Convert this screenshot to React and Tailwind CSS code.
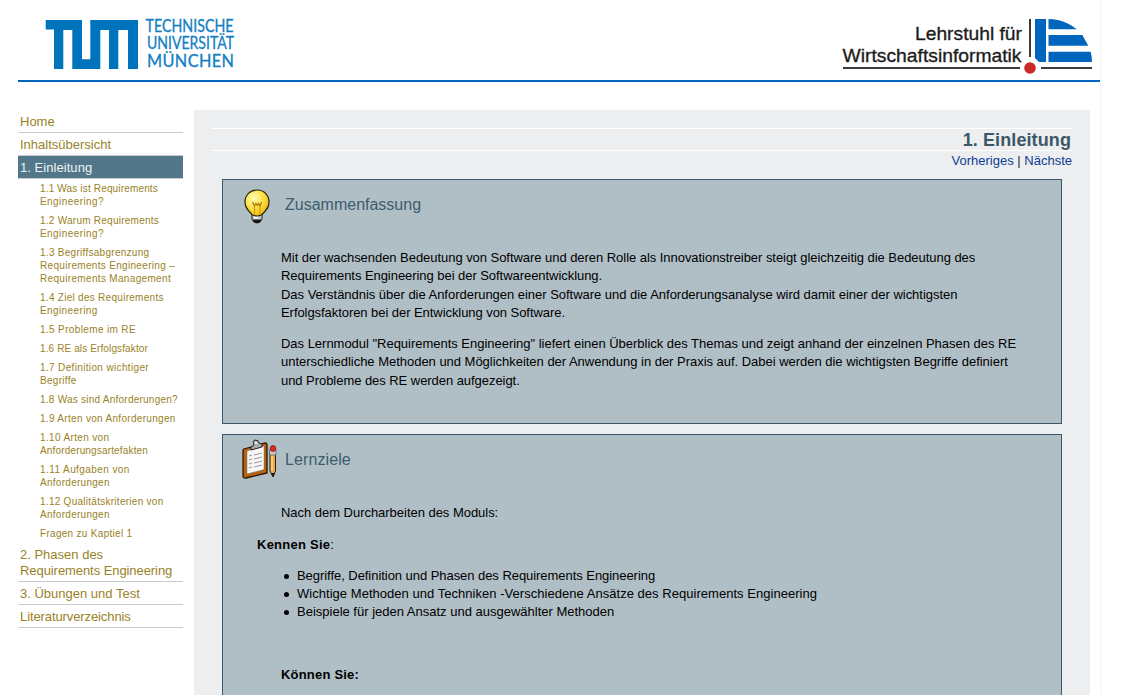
import React from "react";

const chapters = [
  [["1.1 Was ist Requirements", "tracking-[0.16px]"], ["Engineering?", "tracking-[0.42px]"]],
  [["1.2 Warum Requirements", "tracking-[0.25px]"], ["Engineering?", "tracking-[0.42px]"]],
  [["1.3 Begriffsabgrenzung", "tracking-[0.28px]"], ["Requirements Engineering –", "tracking-[0.32px]"], ["Requirements Management", "tracking-[0.33px]"]],
  [["1.4 Ziel des Requirements", "tracking-[0.28px]"], ["Engineering", "tracking-[0.4px]"]],
  [["1.5 Probleme im RE", "tracking-[0.36px]"]],
  [["1.6 RE als Erfolgsfaktor", "tracking-[0.12px]"]],
  [["1.7 Definition wichtiger", "tracking-[0.35px]"], ["Begriffe", "tracking-[0.3px]"]],
  [["1.8 Was sind Anforderungen?", "tracking-[0.24px]"]],
  [["1.9 Arten von Anforderungen", "tracking-[0.31px]"]],
  [["1.10 Arten von", "tracking-[0.35px]"], ["Anforderungsartefakten", "tracking-[0.16px]"]],
  [["1.11 Aufgaben von", "tracking-[0.42px]"], ["Anforderungen", "tracking-[0.28px]"]],
  [["1.12 Qualitätskriterien von", "tracking-[0.27px]"], ["Anforderungen", "tracking-[0.28px]"]],
  [["Fragen zu Kaptiel 1", "tracking-[0.3px]"]],
];

const goals = [
  ["Begriffe, Definition und Phasen des Requirements Engineering", "tracking-[-0.05px]"],
  ["Wichtige Methoden und Techniken -Verschiedene Ansätze des Requirements Engineering", "tracking-[0.035px]"],
  ["Beispiele für jeden Ansatz und ausgewählter Methoden", "tracking-[0px]"],
];

function Line({ t, c = "" }) {
  return <span className={"block whitespace-nowrap " + c}>{t}</span>;
}

function NavItem({ children, active }) {
  return (
    <a className={"block border-b border-[#c9c9c9] pb-[2px] pl-[2px] pt-1 text-[13px] leading-4 " + (active ? "bg-[#52778a] text-[#eef2f4]" : "text-[#998226]")}>
      {children}
    </a>
  );
}

function TumLogo() {
  return (
    <svg width="192" height="56" viewBox="0 0 192 56" className="block">
      <path fill="#0073bd" d="M0.700 4H37V43.300H45.300V4H93V53H83V14H73.300V53H64V14H55.300V53H27.300V14H18.300V53H9V13.500H0.700Z" />
      <g fill="#1380c3" stroke="#1380c3" strokeWidth="0.300" fontFamily="Lato, sans-serif" fontSize="16.300">
        <text x="100.500" y="16" textLength="88" lengthAdjust="spacingAndGlyphs">TECHNISCHE</text>
        <text x="102" y="33.300" textLength="87" lengthAdjust="spacingAndGlyphs">UNIVERSITÄT</text>
        <text x="102" y="50.600" textLength="87" lengthAdjust="spacing">MÜNCHEN</text>
      </g>
    </svg>
  );
}

function ChairLogo() {
  return (
    <svg width="252" height="58" viewBox="0 0 252 58" className="block">
      <g fill="#1c1c1c" stroke="#1c1c1c" strokeWidth="0.350" fontFamily="'Liberation Sans', Arial, sans-serif" fontSize="19">
        <text x="75" y="22" textLength="107" lengthAdjust="spacingAndGlyphs">Lehrstuhl für</text>
        <text x="2.500" y="43.500" textLength="179" lengthAdjust="spacingAndGlyphs">Wirtschaftsinformatik</text>
      </g>
      <path fill="#3c3a3b" d="M189 1H191V39H189ZM3 49H180V51H3ZM201 49H252V51H201Z" />
      <path fill="#0065bd" d="M195 1H206V44H199L195 40ZM208.500 1C219 1 229 5 236.700 11.300H208.500ZM208.500 17H242.300L248.300 27.700H208.500ZM208.500 33.700H250.700Q252 39 252 44H208.500Z" />
      <circle cx="190" cy="50" r="5.800" fill="#cb2a26" />
    </svg>
  );
}

function Bulb() {
  return (
    <svg width="27" height="36" viewBox="0 0 27 36" className="block">
      <defs>
        <radialGradient id="glow" cx="0.36" cy="0.3" r="0.7">
          <stop offset="0" stopColor="#fffbb5" />
          <stop offset="0.5" stopColor="#fbe650" />
          <stop offset="1" stopColor="#f3c010" />
        </radialGradient>
      </defs>
      <path d="M8 24H18V30Q17 34 13 34Q9 34 8 30Z" fill="#c8c8c8" stroke="#222" />
      <path d="M8.500 30.500H17.500L15 34H11Z" fill="#151515" />
      <path d="M10 28.500H14" stroke="#fff" strokeWidth="2" />
      <path d="M13 1C5.500 1 1 6.500 1 13C1 19 4.500 22 8 25.500Q13 28.500 18 25.500C21.500 22 25 19 25 13C25 6.500 20.500 1 13 1Z" fill="url(#glow)" stroke="#2c2508" strokeWidth="1.200" />
      <path d="M10.500 25.500V17.500M16 25.500V17.500" fill="none" stroke="#d49a18" strokeWidth="1.200" />
      <path d="M8.500 13L10.500 17L12 14.500L13.200 16.500L14.500 14.500L16 17L17.500 13" fill="none" stroke="#b37a10" strokeWidth="1.300" />
    </svg>
  );
}

function Clipboard() {
  return (
    <svg width="36" height="42" viewBox="0 0 36 42" className="block">
      <path d="M2 10L23 4Q25 4 25 6V34L4 39Q1 39.500 1 37V12Q1 10 2 10Z" fill="#b8610f" stroke="#2b1604" strokeWidth="1.300" />
      <path d="M5 12L22 7V30.500L5 35Z" fill="#f8f8f8" stroke="#777" strokeWidth="0.500" />
      <path d="M7 17L10 16M7 21L10 20M7 25L10 24M7 29L10 28M12 16L20 14M12 20L20 18M12 24L20 22M12 28L20 26" stroke="#9c9c9c" strokeWidth="1.100" />
      <path d="M9 11V8L12 6Q10 2 13 1Q17 1 17 4L20 5V8Z" fill="#a9a9a9" stroke="#252525" />
      <circle cx="14" cy="4" r="1.300" fill="#eee" />
      <path d="M28 13H33.500V32L31 38L28 32Z" fill="#e9a94a" stroke="#332108" />
      <path d="M30 14V32" stroke="#ffdf91" strokeWidth="1.300" />
      <path d="M29 34H33L31 38Z" fill="#151515" />
      <path d="M27.500 11H34V16H27.500Z" fill="#c6c6cb" stroke="#555" strokeWidth="0.700" />
      <circle cx="31" cy="9.500" r="2.900" fill="#d92b20" stroke="#7b1714" strokeWidth="0.700" />
    </svg>
  );
}

export default function App() {
  return (
    <div className="h-[695px] w-[1134px] overflow-hidden bg-white font-['Liberation_Sans',Arial,sans-serif]">
      <div className="h-full w-[1101px] border-r border-[#f3f4f5]">
        <header className="ml-[18px] flex h-[82px] items-start justify-between border-b-2 border-[#0065bd] pl-[27px] pr-2 pt-4">
          <TumLogo />
          <div className="pt-[2px]"><ChairLogo /></div>
        </header>
        <div className="flex pl-[18px] pt-7">
          <nav className="w-[165px] shrink-0">
            <NavItem><Line t="Home" /></NavItem>
            <NavItem><Line t="Inhaltsübersicht" /></NavItem>
            <NavItem active><Line t="1. Einleitung" c="tracking-[0.05px]" /></NavItem>
            <ul className="pl-[22px] text-[10px] leading-[13px] text-[#998226]">
              {chapters.map((lines, i) => (
                <li key={i} className="py-[3px]">
                  {lines.map(([t, c]) => <Line key={t} t={t} c={c} />)}
                </li>
              ))}
            </ul>
            <NavItem>
              <Line t="2. Phasen des" />
              <Line t="Requirements Engineering" c="tracking-[-0.07px]" />
            </NavItem>
            <NavItem><Line t="3. Übungen und Test" /></NavItem>
            <NavItem><Line t="Literaturverzeichnis" c="tracking-[-0.1px]" /></NavItem>
          </nav>
          <main className="ml-[11px] h-[585px] w-[896px] overflow-hidden bg-[#edeef0] pl-7 pt-[18px]">
            <h1 className="-ml-[10px] h-[23px] w-[860px] border-y border-white pr-[1px] text-right text-[18px] font-bold leading-[22px] tracking-[0.1px] text-[#3b5767]">1. Einleitung</h1>
            <div className="-ml-[10px] h-7 w-[860px] pt-[1px] text-right text-[13px] leading-[18px] text-[#0c3d96]">
              <a>Vorheriges</a> <span className="text-[#302050]">|</span> <a>Nächste</a>
            </div>
            <section className="h-[245px] w-[840px] border border-[#3d5868] bg-[#b0bfc6] text-[13px] leading-[18.300px] text-black">
              <div className="flex h-[69px] pl-[21px] pt-[9px]">
                <Bulb />
                <h2 className="ml-[14px] mt-[6px] text-[16px] leading-5 text-[#3d5c6e]">Zusammenfassung</h2>
              </div>
              <div className="pl-[58px]">
                <Line t="Mit der wachsenden Bedeutung von Software und deren Rolle als Innovationstreiber steigt gleichzeitig die Bedeutung des" c="tracking-[-0.045px]" />
                <Line t="Requirements Engineering bei der Softwareentwicklung." c="tracking-[-0.05px]" />
                <Line t="Das Verständnis über die Anforderungen einer Software und die Anforderungsanalyse wird damit einer der wichtigsten" c="tracking-[-0.025px]" />
                <Line t="Erfolgsfaktoren bei der Entwicklung von Software." c="tracking-[-0.06px]" />
              </div>
              <div className="pl-[58px] pt-[13px]">
                <Line t={'Das Lernmodul "Requirements Engineering" liefert einen Überblick des Themas und zeigt anhand der einzelnen Phasen des RE'} c="tracking-[-0.02px]" />
                <Line t="unterschiedliche Methoden und Möglichkeiten der Anwendung in der Praxis auf. Dabei werden die wichtigsten Begriffe definiert" c="tracking-[-0.023px]" />
                <Line t="und Probleme des RE werden aufgezeigt." c="tracking-[-0.05px]" />
              </div>
            </section>
            <section className="mt-[10px] h-[300px] w-[840px] border border-[#3d5868] bg-[#b0bfc6] text-[13px] leading-[18px] text-black">
              <div className="flex h-[69px] pl-[19px] pt-[4px]">
                <Clipboard />
                <h2 className="ml-[7px] mt-[11px] text-[16px] leading-5 tracking-[0.1px] text-[#3d5c6e]">Lernziele</h2>
              </div>
              <div className="pl-[58px]"><Line t="Nach dem Durcharbeiten des Moduls:" c="tracking-[-0.03px]" /></div>
              <p className="pl-[34px] pt-[14px]"><b className="tracking-[0.25px]">Kennen Sie</b>:</p>
              <ul className="pl-[61px] pt-[13px]">
                {goals.map(([t, c]) => (
                  <li key={t} className="flex items-center">
                    <i className="mr-2 size-[5px] rounded-full bg-black" />
                    <Line t={t} c={c} />
                  </li>
                ))}
              </ul>
              <p className="pl-[58px] pt-[45px] font-bold tracking-[0.2px]">Können Sie:</p>
            </section>
          </main>
        </div>
      </div>
    </div>
  );
}
